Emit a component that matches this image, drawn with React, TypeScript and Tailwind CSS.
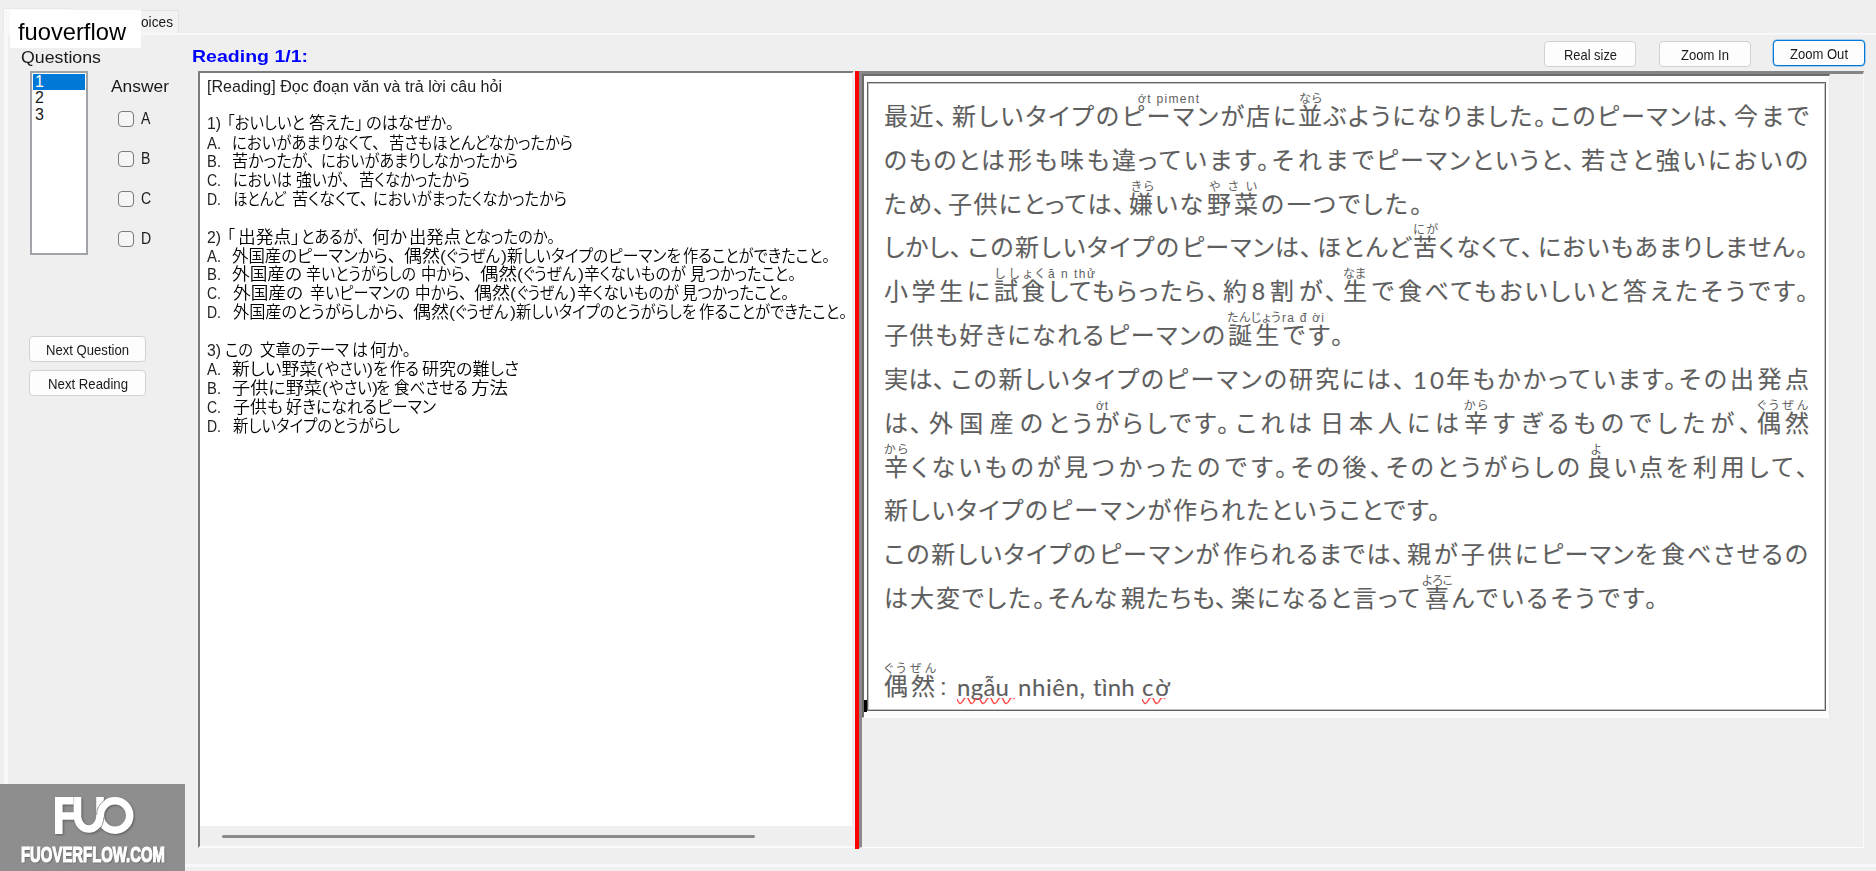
import { useLayoutEffect, useRef } from "react";

type Seg = [text: string, start: number, end: number];

const JP = "font-['Liberation_Sans','Noto_Sans_CJK_JP',sans-serif]";

/* Text run that fills the given width, by tracking or by horizontal scaling. */
function Fit({ text, width, gap = 0, scale = false, className = "" }: { text: string; width: number; gap?: number; scale?: boolean; className?: string }) {
  const ref = useRef<HTMLSpanElement>(null);
  useLayoutEffect(() => {
    const el = ref.current;
    if (!el) return;
    el.style.letterSpacing = "0px";
    el.style.transform = "none";
    const natural = el.getBoundingClientRect().width;
    const n = Array.from(text).length;
    if (scale) el.style.transform = `scaleX(${width / natural})`;
    else if (n > 1) el.style.letterSpacing = `${(width - natural) / (n - 1)}px`;
  }, [text, width, scale]);
  return (
    <span className={`block shrink-0 whitespace-nowrap text-left ${className}`} style={{ width, marginLeft: gap }}>
      <span ref={ref} className="inline-block origin-left">{text}</span>
    </span>
  );
}

function Row({ segs, origin, scale = false, className = "", segClass }: { segs: Seg[]; origin: number; scale?: boolean; className?: string; segClass?: (t: string) => string }) {
  return (
    <div className={`flex ${className}`}>
      {segs.map(([t, s, e], i) => (
        <Fit key={i} text={t} width={e - s} scale={scale} gap={s - (i ? segs[i - 1][2] : origin)} className={segClass ? segClass(t) : ""} />
      ))}
    </div>
  );
}

const questions: { h: string; segs: Seg[] }[] = [
  { h: "h-[37px]", segs: [["[Reading] Đọc đoạn văn và trả lời câu hỏi", 207, 502]] },
  { h: "h-[19.5px]", segs: [["1)", 207, 221], ["「おいしいと", 227, 305], ["答えた」", 309, 363], ["のはなぜか。", 366, 454]] },
  { h: "h-[18.8px]", segs: [["A.", 207, 221], ["においがあまりなくて、", 232, 380], ["苦さもほとんどなかったから", 389, 573]] },
  { h: "h-[18.8px]", segs: [["B.", 207, 221], ["苦かったが、", 232, 315], ["においがあまりしなかったから", 321, 518]] },
  { h: "h-[18.8px]", segs: [["C.", 207, 221], ["においは", 233, 292], ["強いが、", 296, 350], ["苦くなかったから", 359, 470]] },
  { h: "h-[38px]", segs: [["D.", 207, 221], ["ほとんど", 233, 286], ["苦くなくて、", 292, 368], ["においがまったくなかったから", 373, 567]] },
  { h: "h-[18.8px]", segs: [["2)", 207, 221], ["「", 227, 235], ["出発点」", 238, 300], ["とあるが、", 301, 365], ["何か", 372, 407], ["出発点", 409, 461], ["となったのか。", 463, 555]] },
  { h: "h-[18.8px]", segs: [["A.", 207, 221], ["外国産のピーマンから、", 232, 396], ["偶然", 404, 440], ["(", 440, 446], ["ぐうぜん", 446, 500], [")", 501, 507], ["新しいタイプのピーマンを", 507, 681], ["作ることができたこと。", 683, 830]] },
  { h: "h-[18.8px]", segs: [["B.", 207, 221], ["外国産の", 232, 302], ["辛いとうがらしの", 306, 416], ["中から、", 421, 472], ["偶然", 480, 517], ["(", 517, 523], ["ぐうぜん", 523, 576], [")", 578, 584], ["辛くないものが", 584, 686], ["見つかったこと。", 690, 796]] },
  { h: "h-[18.8px]", segs: [["C.", 207, 221], ["外国産の", 233, 303], ["辛いピーマンの", 310, 410], ["中から、", 415, 467], ["偶然", 474, 510], ["(", 510, 516], ["ぐうぜん", 517, 568], [")", 570, 576], ["辛くないものが", 577, 679], ["見つかったこと。", 682, 789]] },
  { h: "h-[38.3px]", segs: [["D.", 207, 221], ["外国産のとうがらしから、", 233, 406], ["偶然", 413, 449], ["(", 449, 455], ["ぐうぜん", 455, 508], [")", 510, 516], ["新しいタイプのとうがらしを", 516, 696], ["作ることができたこと。", 699, 847]] },
  { h: "h-[18.8px]", segs: [["3)", 207, 221], ["この", 225, 253], ["文章のテーマ", 260, 349], ["は", 352, 368], ["何か。", 370, 411]] },
  { h: "h-[18.8px]", segs: [["A.", 207, 221], ["新しい野菜", 232, 317], ["(", 317, 323], ["やさい", 325, 367], [")", 367, 373], ["を", 373, 388], ["作る", 390, 419], ["研究の難しさ", 422, 519]] },
  { h: "h-[18.8px]", segs: [["B.", 207, 221], ["子供に野菜", 232, 322], ["(", 322, 328], ["やさい", 329, 372], [")", 372, 378], ["を", 376, 390], ["食べさせる", 394, 468], ["方法", 471, 508]] },
  { h: "h-[18.8px]", segs: [["C.", 207, 221], ["子供も", 233, 283], ["好きになれるピーマン", 286, 436]] },
  { h: "h-[18.8px]", segs: [["D.", 207, 221], ["新しいタイプのとうがらし", 233, 400]] },
];

const passage: { base: Seg[]; ruby?: Seg[] }[] = [
  {
    ruby: [["ớt piment", 1138, 1199], ["なら", 1299, 1322]],
    base: [["最近、", 884, 947], ["新しいタイプの", 952, 1119], ["ピーマンが", 1122, 1244], ["店に", 1246, 1296], ["並ぶようになりました。", 1298, 1546], ["このピーマンは、", 1550, 1730], ["今まで", 1734, 1809]],
  },
  { base: [["のものとは", 884, 1005], ["形も味も違", 1008, 1136], ["っています。", 1138, 1269], ["それまで", 1272, 1374], ["ピーマンというと、", 1376, 1575], ["若さと強いにおいの", 1581, 1808]] },
  {
    ruby: [["きら", 1131, 1154], ["やさい", 1209, 1257]],
    base: [["ため、", 884, 945], ["子供にとっては、", 948, 1125], ["嫌いな", 1129, 1203], ["野菜の", 1207, 1284], ["一つでした。", 1287, 1422]],
  },
  {
    ruby: [["にが", 1413, 1438]],
    base: [["しかし、", 884, 962], ["この新しいタイプの", 968, 1179], ["ピーマンは、", 1182, 1312], ["ほとんど", 1317, 1411], ["苦くなくて、", 1413, 1533], ["においもあまりしません。", 1538, 1808]],
  },
  {
    ruby: [["ししょく", 995, 1044], ["ă n thử", 1048, 1095], ["なま", 1343, 1366]],
    base: [["小学生に", 884, 990], ["試食", 994, 1045], ["してもらったら、", 1048, 1219], ["約8割", 1223, 1294], ["が、", 1299, 1337], ["生で", 1343, 1394], ["食べてもおいしいと", 1398, 1619], ["答えたそうです。", 1623, 1808]],
  },
  {
    ruby: [["たんじょう", 1227, 1281], ["ra đ ời", 1282, 1324]],
    base: [["子供も好きになれる", 884, 1104], ["ピーマンの", 1107, 1225], ["誕生です。", 1228, 1343]],
  },
  { base: [["実は、", 884, 945], ["この新しいタイプの", 951, 1164], ["ピーマンの", 1166, 1287], ["研究には、", 1289, 1405], ["10", 1413, 1444], ["年もかかっています。", 1446, 1676], ["その", 1679, 1727], ["出発点", 1730, 1809]] },
  {
    ruby: [["ớt", 1096, 1108], ["から", 1464, 1488], ["ぐうぜん", 1757, 1808]],
    base: [["は、", 884, 922], ["外国産の", 929, 1043], ["とうがらしです。", 1048, 1229], ["これは", 1236, 1312], ["日本人には", 1320, 1459], ["辛すぎる", 1464, 1569], ["ものでしたが、", 1573, 1751], ["偶然", 1757, 1809]],
  },
  {
    ruby: [["から", 884, 908], ["よ", 1591, 1602]],
    base: [["辛くないものが見", 884, 1088], ["つかったのです。", 1092, 1287], ["その後、", 1291, 1382], ["そのとうがらしの", 1386, 1580], ["良い点を", 1587, 1688], ["利用して、", 1693, 1808]],
  },
  { base: [["新しいタイプの", 884, 1048], ["ピーマンが", 1050, 1171], ["作られたということです。", 1173, 1440]] },
  { base: [["この新しいタイプの", 884, 1096], ["ピーマンが", 1099, 1219], ["作られるまでは、", 1223, 1404], ["親が子供に", 1407, 1538], ["ピーマンを", 1541, 1657], ["食べさせるの", 1661, 1808]] },
  {
    ruby: [["よろこ", 1422, 1453]],
    base: [["は大変でした。", 884, 1045], ["そんな", 1048, 1117], ["親たちも、", 1121, 1227], ["楽になると言って", 1231, 1420], ["喜んでいるそうです。", 1425, 1657]],
  },
  { base: [] },
  { ruby: [["ぐうぜん", 884, 936]], base: [["偶然", 884, 935], [":", 940, 948], ["ngẫu", 957, 1009], ["nhiên,", 1018, 1085], ["tình", 1093, 1135], ["cờ", 1142, 1170]] },
];

const latin = /^[a-z0-9]/;

function PushButton({ label, width, className = "" }: { label: string; width: number; className?: string }) {
  return (
    <button className={`flex h-[26px] shrink-0 items-center justify-center rounded-[4px] border bg-[#fdfdfd] pt-px text-[15px] leading-none text-[#1a1a1a] ${className}`}>
      <Fit scale text={label} width={width} />
    </button>
  );
}

function Squiggle({ width, className }: { width: number; className: string }) {
  let d = "M0 1";
  for (let x = 0; x < width - 8; x += 11.5) d += ` q2.9 8 5.8 2 t5.7 -2`;
  return (
    <svg className={`block shrink-0 ${className}`} width={width} height="7" fill="none" stroke="#ff4a4a" strokeWidth="1.4">
      <path d={d} />
    </svg>
  );
}

export default function App() {
  return (
    <div className={`relative flex h-[871px] w-[1876px] flex-col overflow-hidden bg-[#efefef] text-[#1a1a1a] ${JP}`}>
      {/* tab strip */}
      <div className="flex h-[33px] shrink-0 items-end pl-[3px]">
        <div className="h-[25px] w-[68px] border border-b-0 border-[#e8e8e8] bg-[#f9f9f9]" />
        <div className="flex h-[23px] w-[108px] items-center justify-end border border-b-0 border-[#e2e2e2] bg-[#f3f3f3] pr-[5px] pt-px text-[15px]">
          <Fit scale text="oices" width={32} />
        </div>
      </div>
      <div className="absolute left-[10px] top-[10px] flex h-[38px] w-[131px] items-center bg-white pl-[8px] pt-[5px] text-[24px] leading-none text-black">
        <Fit scale text="fuoverflow" width={108} />
      </div>

      {/* tab page */}
      <div className="ml-[4px] flex h-[834px] shrink-0 border-b-[3px] border-l-4 border-t-2 border-[#f8f8f8]">
        {/* question list and answers */}
        <div className="w-[184px] shrink-0">
          <div className="mt-[13px] h-[22px] pl-[13px] text-[16.5px] leading-[18px]"><Fit scale text="Questions" width={80} /></div>
          <div className="mt-px flex">
            <div className="ml-[22px] h-[184px] w-[58px] border-2 border-[#a0a4a9] bg-white p-px text-[16px] leading-[16.3px]">
              <div className="bg-[#0078d7] pl-[2px] text-white">1</div>
              <div className="pl-[2px]">2</div>
              <div className="pl-[2px]">3</div>
            </div>
            <div className="ml-[23px] pt-[6px]">
              <div className="h-[20px] text-[16.5px] leading-[19px]"><Fit scale text="Answer" width={58} /></div>
              <div className="mt-[14px] flex flex-col gap-6 pl-[7px]">
                {["A", "B", "C", "D"].map((l) => (
                  <div key={l} className="flex h-4 items-center">
                    <span className="h-4 w-4 rounded-[4px] border-[1.5px] border-[#7c7c7c] bg-[#f5f5f5]" />
                    <span className="ml-[7px] origin-left scale-x-[0.88] text-[16px] leading-4">{l}</span>
                  </div>
                ))}
              </div>
            </div>
          </div>
          <div className="mt-[81px] flex flex-col gap-2 pl-[21px]">
            <PushButton label="Next Question" width={83} className="w-[117px] border-[#d2d2d2]" />
            <PushButton label="Next Reading" width={80} className="w-[117px] border-[#d2d2d2]" />
          </div>
        </div>

        {/* reading */}
        <div className="flex flex-col">
          <div className="flex h-[36px] shrink-0">
            <div className="mt-[11px] text-[16.5px] font-bold leading-[20px] text-[#0000ff]"><Fit scale text="Reading 1/1:" width={116} /></div>
            <div className="ml-[1236px] flex pt-[6px]">
              <PushButton label="Real size" width={53} className="w-[92px] border-[#d2d2d2]" />
              <PushButton label="Zoom In" width={48} className="ml-[23px] w-[92px] border-[#d2d2d2]" />
              <PushButton label="Zoom Out" width={58} className="-mt-px ml-[22px] w-[92px] border-[1.5px] border-[#0078d7] ring-[0.5px] ring-[#0078d7]/60" />
            </div>
          </div>

          <div className="flex h-[778px] pl-[6px]">
            {/* questions text */}
            <div className="flex h-[777px] w-[656px] shrink-0 flex-col border-2 border-b-[#fafafa] border-l-[#7b7b7b] border-r-[#eeeeee] border-t-[#7b7b7b] bg-white">
              <div className="h-[753px] shrink-0 pt-[4px] text-[17px] leading-[19px] text-black">
                {questions.map((q, i) => (
                  <Row
                    key={i}
                    segs={q.segs}
                    origin={200}
                    scale
                    className={q.h}
                    segClass={(t) => (/^[[()1-9A-D]/.test(t) ? "text-[16px] text-[#222222]" : "font-[350] [font-feature-settings:'palt']")}
                  />
                ))}
              </div>
              <div className="flex flex-1 items-center bg-[#efefef] pl-[22px]">
                <div className="h-[3px] w-[533px] rounded-full bg-[#8a8a8a]" />
              </div>
            </div>

            <div className="ml-px h-[778px] w-[4px] shrink-0 bg-[#ff0000]" />

            {/* image viewer */}
            <div className="h-[777px] w-[1005px] shrink-0 border-b border-l-[3px] border-r border-t-[3px] border-b-white border-l-[#8a8a8a] border-r-[#fafafa] border-t-[#858585]">
              <div className="relative h-[644px] w-[968px] border-b border-l-2 border-r border-t-2 border-b-white border-l-[#6b6b6b] border-r-[#e8e8e8] border-t-[#6b6b6b] bg-[#fdfdfd] pl-[3px] pt-[6px]">
                <div className="absolute bottom-[5px] left-0 h-[12px] w-[3px] bg-black" />
                <div className="h-[629px] w-[959px] border border-[#606060] bg-white pl-px pt-[9px] text-[24px] leading-[26px] text-[#5e5e5e] shadow-[inset_0_0_0_1px_#c4c4c4] [-webkit-text-stroke:0.12px_#5e5e5e] [font-feature-settings:'palt']">
                  {passage.map((l, i) => (
                    <div key={i} className="h-[43.83px]">
                      <Row segs={l.ruby ?? []} origin={869} className="h-[12px] text-[12px] leading-[14px] [-webkit-text-stroke:0px]" />
                      <Row segs={l.base} origin={869} className="h-[26px]" segClass={(t) => (latin.test(t) ? "font-['Lato','Open_Sans',sans-serif]" : "")} />
                    </div>
                  ))}
                  <div className="-mt-[8px] flex">
                    <Squiggle width={58} className="ml-[88px]" />
                    <Squiggle width={30} className="ml-[127px]" />
                  </div>
                </div>
              </div>
            </div>
          </div>
        </div>
      </div>

      {/* watermark */}
      <div className="absolute bottom-0 left-0 h-[87px] w-[185px] bg-[#8e8e8e]">
        <svg className="absolute left-[55px] top-[13px] drop-shadow-[1px_1px_1px_rgba(0,0,0,0.35)]" width="80" height="39" viewBox="0 0 80 39" fill="none" stroke="#fff" strokeWidth="7.6">
          <path d="M3.8 37V3.8H20M3.8 19H20" />
          <circle cx="60" cy="18.5" r="14.7" />
          <path d="M22.5 0V20A11.3 13.2 0 0 0 45 20V0" />
          <path d="M41.6 18A18.6 18.6 0 0 1 50 2.8" stroke="#8e8e8e" strokeWidth="0.9" />
          <path d="M48.9 20Q48.5 28 44 33.5" stroke="#8e8e8e" strokeWidth="0.9" />
          <path d="M18.6 0V11" stroke="#b5b5b5" strokeWidth="0.6" />
        </svg>
        <div className="absolute left-[21px] top-[60px] font-['Liberation_Sans',sans-serif] text-[22px] font-bold leading-[22px] text-white [-webkit-text-stroke:1.2px_white] [text-shadow:1px_1px_2px_rgba(0,0,0,0.45)]">
          <Fit scale text="FUOVERFLOW.COM" width={144} />
        </div>
      </div>
    </div>
  );
}
